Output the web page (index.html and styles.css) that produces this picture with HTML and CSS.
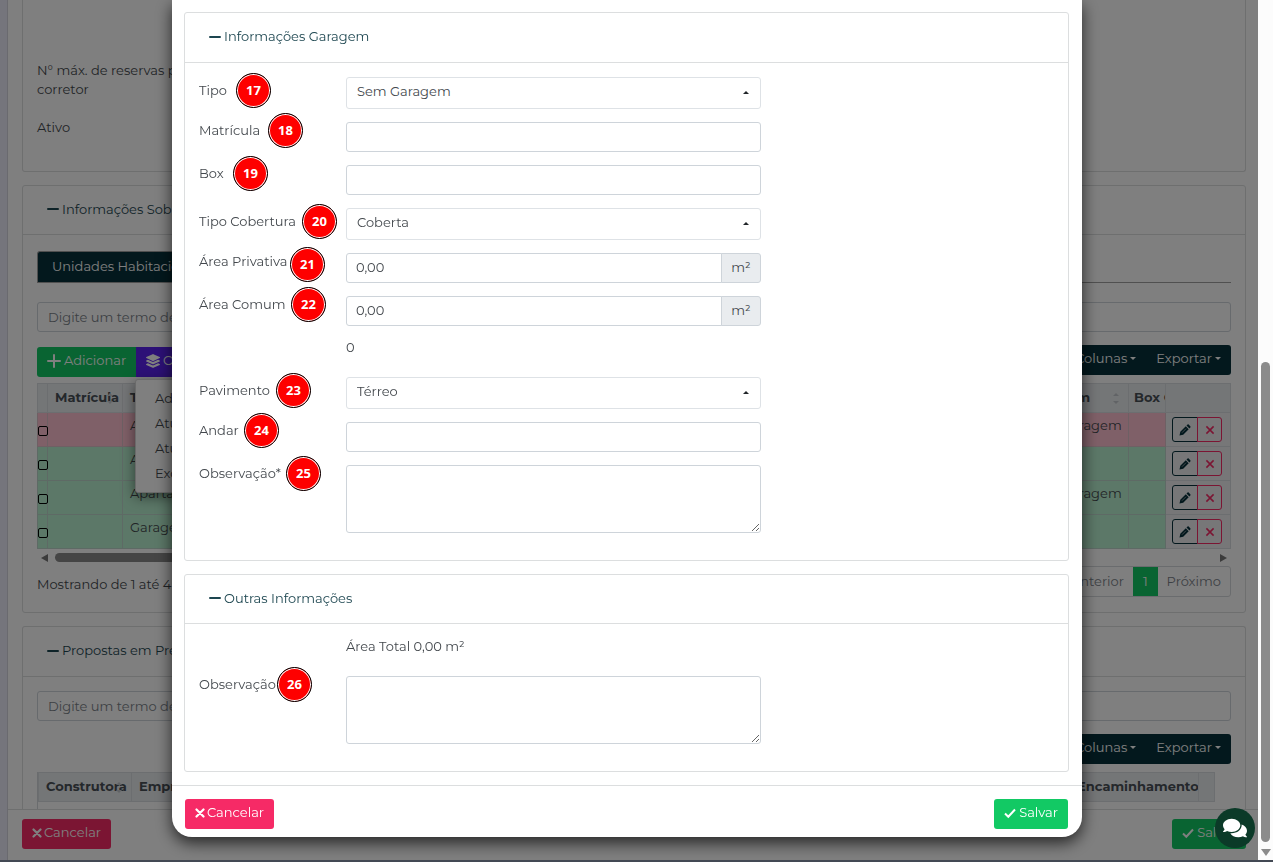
FILE: index.html
```html
<!DOCTYPE html>
<html lang="pt-BR">
    <head>
        <meta charset="utf-8">
        <meta name="viewport" content="width=device-width, initial-scale=1.0">
        <title>Unidades Habitacionais | Informações Garagem</title>
        <link rel="stylesheet" href="styles.css">
    </head>
    <body>
        <!-- icons -->
        <svg class="sprite" aria-hidden="true">
            <symbol id="i-minus" viewBox="0 0 12 12"><path d="M1 6h10" stroke="currentColor" stroke-width="2" stroke-linecap="round"/></symbol>
            <symbol id="i-plus" viewBox="0 0 14 14"><path d="M1 7h12M7 1v12" stroke="currentColor" stroke-width="2" stroke-linecap="round"/></symbol>
            <symbol id="i-times" viewBox="0 0 10 10"><path d="M1.5 1.5l7 7M8.500 1.500l-7 7" stroke="currentColor" stroke-width="2.200" stroke-linecap="round"/></symbol>
            <symbol id="i-x" viewBox="0 0 10 10"><path d="M2 2l6 6M8 2l-6 6" stroke="currentColor" stroke-width="1.300"/></symbol>
            <symbol id="i-check" viewBox="0 0 12 12"><path d="M1 6.500l3.300 3.300L11 2.500" fill="none" stroke="currentColor" stroke-width="2"/></symbol>
            <symbol id="i-layers" viewBox="0 0 512 512"><path fill="currentColor" d="M12 148l232 105c8 4 17 4 25 0l232-105c15-7 15-30 0-37L269 6c-8-4-17-4-25 0L12 111c-15 7-15 30 0 37zm488 89l-58-26-160 72c-8 4-17 6-26 6s-18-2-26-6L70 211l-58 26c-15 7-15 29 0 36l232 105c8 4 17 4 25 0l231-105c16-7 16-29 0-36zm0 127l-58-26-160 73c-8 4-17 5-26 5s-18-1-26-5L70 338l-58 26c-15 7-15 30 0 37l232 105c8 4 17 4 25 0l231-105c16-7 16-30 0-37z"/></symbol>
            <symbol id="i-pencil" viewBox="0 0 12 12"><path d="M.5 11.500l.8-3.700L6.800 2.300l2.900 2.900L4.200 10.700zM7.500 1.600l.9-.9c.5-.5 1-.5 1.400 0l1.500 1.500c.4.400.4.900 0 1.400l-.9.900z" fill="currentColor"/><path d="M3 8.700l4-4" stroke="#bbb" stroke-width=".7"/></symbol>
            <symbol id="i-chat" viewBox="0 0 576 512"><path fill="currentColor" d="M416 192c0-88-93-160-208-160S0 104 0 192c0 34 14 66 38 92-13 30-36 55-36 55-2 2-3 6-1 9s4 5 7 5c37 0 67-12 88-25 33 15 71 24 112 24 115 0 208-72 208-160zm122 220c24-26 38-58 38-92 0-67-53-124-129-148 1 7 1 13 1 20 0 106-108 192-240 192-11 0-21-1-32-2 32 58 104 98 192 98 41 0 79-9 112-24 21 13 51 24 88 24 3 0 6-2 7-5s1-6-1-8c0 0-23-25-36-55z"/></symbol>
        </svg>

        <div class="app">
            <div class="sidebar"></div>
            <div class="page">
                <div class="content">
                    <div class="card first">
                        <p class="field-name">N° máx. de reservas por corretor</p>
                        <p class="field-name">Ativo</p>
                    </div>

                    <div class="card units">
                        <div class="card-header"><svg class="icon"><use href="#i-minus"/></svg><a href="#unidades">Informações Sobre as Unidades</a></div>
                        <div class="card-body">
                            <div class="tabs"><button class="tab">Unidades Habitacionais</button></div>
                            <input class="search" type="text" placeholder="Digite um termo de pesquisa" aria-label="Pesquisar unidades">
                            <div class="toolbar">
                                <div class="group left-group">
                                    <button class="btn green"><svg class="icon big"><use href="#i-plus"/></svg>Adicionar</button>
                                    <button class="btn purple"><svg class="icon big"><use href="#i-layers"/></svg>Opções</button>
                                    <ul class="menu">
                                        <li><a href="#adicionar">Adicionar</a></li>
                                        <li><a href="#atualizar">Atualizar</a></li>
                                        <li><a href="#valores">Atualizar valores</a></li>
                                        <li><a href="#excluir">Excluir</a></li>
                                    </ul>
                                </div>
                                <div class="group right-group">
                                    <button class="btn navy">Colunas<i class="caret"></i></button>
                                    <button class="btn navy">Exportar<i class="caret"></i></button>
                                </div>
                            </div>
                            <table class="grid">
                                <colgroup><col class="c-check"><col class="c-mat"><col><col class="c-gar"><col class="c-box"><col class="c-act"></colgroup>
                                <thead>
                                    <tr><th></th><th>Matrícula<i class="sort"></i></th><th>Tipo</th><th>Garagem<i class="sort"></i></th><th class="tight">Box Garagem</th><th></th></tr>
                                </thead>
                                <tbody>
                                    <tr class="pink"><td><input type="checkbox" aria-label="Selecionar"></td><td></td><td>Apartamento</td><td>Sem Garagem</td><td></td><td class="act"><div><button class="edit" aria-label="Editar"><svg><use href="#i-pencil"/></svg></button><button class="del" aria-label="Excluir"><svg><use href="#i-x"/></svg></button></div></td></tr>
                                    <tr><td><input type="checkbox" aria-label="Selecionar"></td><td></td><td>Apartamento</td><td></td><td></td><td class="act"><div><button class="edit" aria-label="Editar"><svg><use href="#i-pencil"/></svg></button><button class="del" aria-label="Excluir"><svg><use href="#i-x"/></svg></button></div></td></tr>
                                    <tr><td><input type="checkbox" aria-label="Selecionar"></td><td></td><td>Apartamento</td><td>Sem Garagem</td><td></td><td class="act"><div><button class="edit" aria-label="Editar"><svg><use href="#i-pencil"/></svg></button><button class="del" aria-label="Excluir"><svg><use href="#i-x"/></svg></button></div></td></tr>
                                    <tr><td><input type="checkbox" aria-label="Selecionar"></td><td></td><td>Garagem</td><td></td><td></td><td class="act"><div><button class="edit" aria-label="Editar"><svg><use href="#i-pencil"/></svg></button><button class="del" aria-label="Excluir"><svg><use href="#i-x"/></svg></button></div></td></tr>
                                </tbody>
                            </table>
                            <div class="hscroll"><i class="arrow-l"></i><i class="bar"></i><i class="arrow-r"></i></div>
                            <div class="pager">
                                <span>Mostrando de 1 até 4 de 4 registros</span>
                                <div class="pages"><a href="#anterior">Anterior</a><a href="#1" class="on">1</a><a href="#proximo">Próximo</a></div>
                            </div>
                        </div>
                    </div>

                    <div class="card proposals">
                        <div class="card-header"><svg class="icon"><use href="#i-minus"/></svg><a href="#propostas">Propostas em Pré-cadastro</a></div>
                        <div class="card-body">
                            <input class="search" type="text" placeholder="Digite um termo de pesquisa" aria-label="Pesquisar propostas">
                            <div class="toolbar">
                                <div class="group right-group">
                                    <button class="btn navy">Colunas<i class="caret"></i></button>
                                    <button class="btn navy">Exportar<i class="caret"></i></button>
                                </div>
                            </div>
                            <div class="table-box">
                                <table class="grid">
                                    <colgroup><col class="c-cons"><col><col class="c-enc"><col class="c-end"></colgroup>
                                    <thead>
                                        <tr><th>Construtora<i class="sort"></i></th><th>Empreendimento</th><th class="tight">Encaminhamento</th><th></th></tr>
                                    </thead>
                                </table>
                            </div>
                        </div>
                    </div>
                </div>
                <div class="page-footer">
                    <button class="btn red"><svg class="icon small"><use href="#i-times"/></svg>Cancelar</button>
                    <button class="btn green"><svg class="icon"><use href="#i-check"/></svg>Salvar</button>
                </div>
            </div>
            <div class="scrollbar"><i class="thumb"></i><i class="arrow-d"></i></div>
        </div>

        <div class="overlay">
            <form class="modal">
                <div class="card garage">
                    <div class="card-header"><svg class="icon"><use href="#i-minus"/></svg><a href="#garagem">Informações Garagem</a></div>
                    <div class="card-body form">
                        <div class="row sel">
                            <label for="tipo">Tipo</label><b class="pin p17">17</b>
                            <div class="select"><select id="tipo"><option>Sem Garagem</option></select></div>
                        </div>
                        <div class="row">
                            <label for="matricula">Matrícula</label><b class="pin p18">18</b>
                            <input id="matricula" type="text">
                        </div>
                        <div class="row">
                            <label for="box">Box</label><b class="pin p19">19</b>
                            <input id="box" type="text">
                        </div>
                        <div class="row sel">
                            <label for="cobertura">Tipo Cobertura</label><b class="pin p20">20</b>
                            <div class="select"><select id="cobertura"><option>Coberta</option></select></div>
                        </div>
                        <div class="row">
                            <label for="privativa">Área Privativa</label><b class="pin p21">21</b>
                            <div class="addon"><input id="privativa" type="text" value="0,00"><span>m²</span></div>
                        </div>
                        <div class="row">
                            <label for="comum">Área Comum</label><b class="pin p22">22</b>
                            <div class="addon"><input id="comum" type="text" value="0,00"><span>m²</span></div>
                        </div>
                        <div class="row static"><p>0</p></div>
                        <div class="row sel">
                            <label for="pavimento">Pavimento</label><b class="pin p23">23</b>
                            <div class="select"><select id="pavimento"><option>Térreo</option></select></div>
                        </div>
                        <div class="row">
                            <label for="andar">Andar</label><b class="pin p24">24</b>
                            <input id="andar" type="text">
                        </div>
                        <div class="row">
                            <label for="obs1">Observação*</label><b class="pin p25">25</b>
                            <textarea id="obs1"></textarea>
                        </div>
                    </div>
                </div>
                <div class="card">
                    <div class="card-header"><svg class="icon"><use href="#i-minus"/></svg><a href="#outras">Outras Informações</a></div>
                    <div class="card-body form">
                        <div class="row static"><p>Área Total 0,00 m²</p></div>
                        <div class="row">
                            <label for="obs2">Observação</label><b class="pin p26">26</b>
                            <textarea id="obs2"></textarea>
                        </div>
                    </div>
                </div>
                <div class="modal-footer">
                    <button type="button" class="btn red"><svg class="icon small"><use href="#i-times"/></svg>Cancelar</button>
                    <button type="button" class="btn green"><svg class="icon"><use href="#i-check"/></svg>Salvar</button>
                </div>
            </form>
        </div>
        <button class="chat" aria-label="Chat"><svg><use href="#i-chat"/></svg></button>
    </body>
</html>
```
FILE: styles.css
```css
*{
    box-sizing: border-box;
}
html, body{
    margin: 0px;
    padding: 0px;
    height: 100%;
    overflow: hidden;
}
body, button, input, select, textarea{
    font-family: 'Montserrat', 'Inter', sans-serif;
    font-size: 13px;
    line-height: 19px;
    color: #43484d;
}
a{
    color: inherit;
    text-decoration: none;
}
p, ul{
    margin: 0px;
    padding: 0px;
    list-style: none;
}
.sprite{
    display: none;
}
.icon{
    width: 12px;
    height: 12px;
    margin-right: 3px;
    flex: none;
}
.icon.big{
    width: 14px;
    height: 14px;
}
.icon.small{
    width: 10px;
    height: 10px;
    margin-right: 2px;
}
.app{
    display: flex;
    height: 100%;
    border-bottom: 2px solid #434954;
}
.sidebar{
    width: 8px;
    background-color: #ebebf8;
    border-right: 1px solid #d4d4de;
}
.page{
    flex: 1;
    min-width: 0;
    display: flex;
    flex-direction: column;
}
.content{
    flex: 1;
    min-height: 0;
    overflow: hidden;
    padding: 0px 12px 0px 14px;
}
.card{
    border: 1px solid #dcdedf;
    border-radius: 3px;
    margin-bottom: 13px;
}
.card-header{
    display: flex;
    align-items: center;
    height: 49px;
    padding: 0px 24px 2px;
    border-bottom: 1px solid #dcdedf;
    color: #1d4650;
}
.card-body{
    padding: 16px 14px;
}
.first{
    border-top: none;
    border-radius: 0px 0px 3px 3px;
    padding: 61px 14px 34px;
}
.field-name{
    width: 160px;
}
.field-name + .field-name{
    margin-top: 19px;
}
.tabs{
    border-bottom: 1px solid #a0a0a0;
}
.tab{
    display: block;
    height: 31px;
    padding: 0px 14px 2px;
    border: 1px solid #a0a0a0;
    border-bottom: none;
    border-radius: 3px 3px 0px 0px;
    background-color: #06303a;
    color: white;
}
.search{
    display: block;
    width: 100%;
    height: 30px;
    padding: 0px 10px;
    border: 1px solid #ced4da;
    border-radius: 3px;
}
.tabs + .search{
    margin-top: 19px;
}
.search::placeholder{
    color: #7b8289;
}
.toolbar{
    display: flex;
    margin: 13px 0px 8px;
}
.units .toolbar{
    margin-bottom: 6px;
}
.group{
    display: flex;
    position: relative;
    z-index: 1;
}
.left-group{
    padding-top: 2px;
}
.right-group{
    margin-left: auto;
}
.btn{
    display: flex;
    align-items: center;
    height: 30px;
    padding: 0px 10px 3px;
    border: none;
    border-radius: 3px;
    color: white;
}
.group .btn{
    border-radius: 0px;
}
.group .btn:first-child{
    border-radius: 3px 0px 0px 3px;
}
.right-group .btn:last-child{
    border-radius: 0px 3px 3px 0px;
}
.green{
    background-color: #12c964;
}
.purple{
    background-color: #5a22ee;
}
.navy{
    background-color: #06303a;
}
.red{
    background-color: #f62a66;
}
.caret{
    margin-left: 3px;
    border: 3px solid transparent;
    border-top-color: currentColor;
    border-bottom: none;
}
.menu{
    position: absolute;
    top: 34px;
    left: 98px;
    width: 180px;
    padding: 6px 19px;
    background-color: white;
    border: 1px solid #d5d5d5;
    border-radius: 3px;
    box-shadow: 0px 4px 14px rgba(0,0,0,0.5);
}
.menu li{
    line-height: 25px;
}
.grid{
    width: 100%;
    table-layout: fixed;
    border-collapse: collapse;
    border: 1px solid #d5d8dc;
}
.c-check{ width: 10px; }
.c-mat{ width: 75px; }
.c-gar{ width: 108px; }
.c-box{ width: 37px; }
.c-act{ width: 65px; }
.c-cons{ width: 93px; }
.c-enc{ width: 127px; }
.c-end{ width: 16px; }
.grid th{
    position: relative;
    height: 29px;
    padding: 0px 6px 2px 7px;
    background-color: #e9ecef;
    border: 1px solid #d9dce0;
    text-align: left;
    color: #495057;
    font-weight: 700;
    white-space: nowrap;
    overflow: hidden;
}
.grid .tight{
    padding: 0px 0px 2px 5px;
}
.sort{
    position: absolute;
    right: 9px;
    top: 9px;
    border: 3px solid transparent;
    border-top: none;
    border-bottom-color: #c3c7cc;
}
.sort::after{
    content: '';
    position: absolute;
    left: -3px;
    top: 8px;
    border: 3px solid transparent;
    border-bottom: none;
    border-top-color: #c3c7cc;
}
.grid td{
    height: 34px;
    padding: 3px 7px;
    background-color: #b8f0d0;
    border: 1px solid #bcd5cb;
    vertical-align: top;
    white-space: nowrap;
}
.grid .pink td{
    background-color: #ffc0d0;
    border-color: #dcc0c8;
}
.grid td:first-child{
    padding: 0px;
    vertical-align: middle;
}
.grid input{
    display: block;
    position: relative;
    appearance: none;
    width: 10px;
    height: 10px;
    margin: 2px 0px 0px;
    border: 1px solid black;
    border-radius: 2px;
}
.grid td.act, .grid .pink td.act{
    padding: 4px 6px;
    background-color: #eeeff1;
    border-color: #d9dce0;
}
.act div{
    display: flex;
}
.act button{
    display: flex;
    align-items: center;
    justify-content: center;
    width: 26px;
    height: 25px;
    padding: 0px;
    background: none;
    border: 1px solid #06303a;
    border-radius: 3px 0px 0px 3px;
    color: #06303a;
}
.act button.del{
    border-color: #f62a66;
    border-radius: 0px 3px 3px 0px;
    color: #f62a66;
    width: 25px;
    margin-left: -1px;
}
.act svg{
    width: 12px;
    height: 12px;
}
.hscroll{
    display: flex;
    align-items: center;
    height: 17px;
    padding: 0px 4px;
}
.hscroll .bar{
    width: 80%;
    height: 9px;
    margin-left: 7px;
    border-radius: 5px;
    background-color: #8b8b8b;
}
.arrow-l, .arrow-r{
    border: 4px solid transparent;
    border-left: none;
    border-right: 7px solid #777;
}
.arrow-r{
    margin-left: auto;
    border-right: none;
    border-left: 7px solid #777;
}
.pager{
    display: flex;
    align-items: center;
    justify-content: space-between;
    height: 31px;
}
.pager span{
    padding-top: 6px;
}
.pages{
    display: flex;
    line-height: 29px;
    border: 1px solid #d5d8dc;
    border-radius: 3px;
    color: #7b8289;
}
.pages a{
    padding: 0px 9px;
}
.pages .on{
    padding: 0px 10px;
    background-color: #12c964;
    color: white;
}
.units .card-body{
    padding-bottom: 15px;
}
.proposals{
    margin-bottom: 0px;
    border-bottom: none;
}
.proposals .card-header{
    height: 50px;
}
.proposals .card-body{
    padding-top: 14px;
}
.table-box{
    height: 60px;
    padding-right: 16px;
    border-left: 1px solid #d5d8dc;
}
.page-footer, .modal-footer{
    display: flex;
    justify-content: space-between;
    border-top: 1px solid #dcdedf;
}
.page-footer{
    height: 51px;
    padding: 9px 12px 0px 14px;
}
.scrollbar{
    width: 15px;
    display: flex;
    flex-direction: column;
    align-items: center;
    justify-content: flex-end;
    background-color: #fcfcfc;
}
.thumb{
    width: 9px;
    height: calc(56% - 2px);
    border-radius: 5px;
    background-color: #8b8b8b;
}
.arrow-d{
    margin: 7px 0px 4px;
    border: 5px solid transparent;
    border-top: 7px solid #8b8b8b;
    border-bottom: none;
}

/* modal */
.overlay{
    position: fixed;
    top: 0;
    left: 0;
    right: 15px;
    bottom: 2px;
    overflow: hidden;
    z-index: 10;
    background-color: rgba(0,0,0,0.5);
}
.modal{
    margin: 0px 176px 0px 172px;
    padding-top: 12px;
    background-color: white;
    border-radius: 0px 0px 20px 20px;
    box-shadow: 0px 6px 16px rgba(0,0,0,0.7);
}
.modal .card{
    margin: 0px 13px 13px 12px;
}
.form{
    display: flex;
    flex-direction: column;
    gap: 13px;
    padding: 14px 14px 27px;
}
.garage .card-header{
    height: 50px;
}
.row{
    display: grid;
    grid-template-columns: 147px 415px;
    position: relative;
}
.row label{
    line-height: 17px;
}
.sel label{
    padding-top: 5px;
}
.row input, .row textarea, .row select{
    width: 100%;
    height: 30px;
    margin: 0px;
    padding: 0px 9px 2px;
    background-color: white;
    border: 1px solid #ced4da;
    border-radius: 3px;
}
.row textarea{
    display: block;
    height: 68px;
}
.row select{
    display: block;
    appearance: none;
    height: 32px;
    padding: 0px 10px 3px;
    border-color: #dee2e6;
}
.select{
    position: relative;
}
.select::after{
    content: '';
    position: absolute;
    right: 12px;
    top: 14px;
    border: 3px solid transparent;
    border-top: none;
    border-bottom-color: #212529;
}
.addon{
    display: flex;
}
.addon input{
    flex: 1;
    border-radius: 3px 0px 0px 3px;
}
.addon span{
    width: 40px;
    margin-left: -1px;
    line-height: 26px;
    text-align: center;
    background-color: #e9ecef;
    border: 1px solid #ced4da;
    border-radius: 0px 3px 3px 0px;
}
.static{
    height: 25px;
}
.static p{
    grid-column: 2;
    line-height: 17px;
}
.pin{
    position: absolute;
    top: -9px;
    width: 35px;
    height: 35px;
    border: 1px solid black;
    border-radius: 50%;
    background-color: #fe0000;
    box-shadow: inset 0px 0px 0px 1px white;
    color: white;
    font-family: 'Open Sans', sans-serif;
    font-size: 13px;
    font-weight: 700;
    line-height: 33px;
    text-align: center;
}
.sel .pin{
    top: -4px;
}
.p17{ left: 37px; }
.p18{ left: 69px; }
.p19{ left: 34px; }
.p20{ left: 103px; }
.p21{ left: 91px; top: -6px; }
.p22{ left: 92px; }
.p23{ left: 77px; }
.p24{ left: 45px; }
.p25{ left: 87px; }
.p26{ left: 78px; }
.modal-footer{
    padding: 13px 14px 8px 13px;
}
.chat{
    position: fixed;
    z-index: 11;
    right: 18px;
    bottom: 14px;
    display: flex;
    align-items: center;
    justify-content: center;
    width: 40px;
    height: 40px;
    padding: 0px;
    border: none;
    border-radius: 50%;
    background-color: #0b3a28;
    color: white;
}
.chat svg{
    width: 24px;
    height: 22px;
}
```
